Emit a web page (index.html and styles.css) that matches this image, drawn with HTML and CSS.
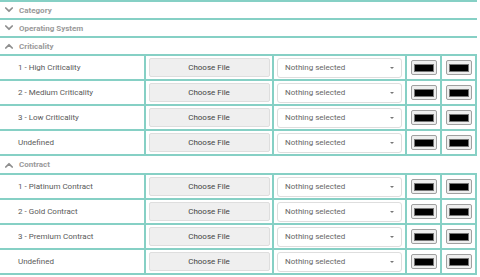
FILE: index.html
```html
<!DOCTYPE html>
<html>
<head>
<meta charset="utf-8">
<link rel="stylesheet" href="styles.css">
</head>
<body>
<div class="panel">
  <div class="hdr first"><svg class="chev" viewBox="0 0 10 7" width="8" height="6"><polyline points="1,1 5,5 9,1"/></svg><span>Category</span></div>
  <div class="hdr"><svg class="chev" viewBox="0 0 10 7" width="8" height="6"><polyline points="1,1 5,5 9,1"/></svg><span>Operating System</span></div>
  <div class="hdr"><svg class="chev" viewBox="0 0 10 7" width="8" height="6"><polyline points="1,6 5,2 9,6"/></svg><span>Criticality</span></div>
  <div class="grid">
    <div class="cell label">1 - High Criticality</div>
    <div class="cell"><div class="btn">Choose File</div></div>
    <div class="cell"><div class="sel"><span>Nothing selected</span><i class="caret"></i></div></div>
    <div class="cell"><div class="sw"><div class="sw-in"></div></div></div>
    <div class="cell"><div class="sw"><div class="sw-in"></div></div></div>

    <div class="cell label">2 - Medium Criticality</div>
    <div class="cell"><div class="btn">Choose File</div></div>
    <div class="cell"><div class="sel"><span>Nothing selected</span><i class="caret"></i></div></div>
    <div class="cell"><div class="sw"><div class="sw-in"></div></div></div>
    <div class="cell"><div class="sw"><div class="sw-in"></div></div></div>

    <div class="cell label">3 - Low Criticality</div>
    <div class="cell"><div class="btn">Choose File</div></div>
    <div class="cell"><div class="sel"><span>Nothing selected</span><i class="caret"></i></div></div>
    <div class="cell"><div class="sw"><div class="sw-in"></div></div></div>
    <div class="cell"><div class="sw"><div class="sw-in"></div></div></div>

    <div class="cell label">Undefined</div>
    <div class="cell"><div class="btn">Choose File</div></div>
    <div class="cell"><div class="sel"><span>Nothing selected</span><i class="caret"></i></div></div>
    <div class="cell"><div class="sw"><div class="sw-in"></div></div></div>
    <div class="cell"><div class="sw"><div class="sw-in"></div></div></div>
  </div>
  <div class="hdr nob"><svg class="chev" viewBox="0 0 10 7" width="8" height="6"><polyline points="1,6 5,2 9,6"/></svg><span>Contract</span></div>
  <div class="grid">
    <div class="cell label">1 - Platinum Contract</div>
    <div class="cell"><div class="btn">Choose File</div></div>
    <div class="cell"><div class="sel"><span>Nothing selected</span><i class="caret"></i></div></div>
    <div class="cell"><div class="sw"><div class="sw-in"></div></div></div>
    <div class="cell"><div class="sw"><div class="sw-in"></div></div></div>

    <div class="cell label">2 - Gold Contract</div>
    <div class="cell"><div class="btn">Choose File</div></div>
    <div class="cell"><div class="sel"><span>Nothing selected</span><i class="caret"></i></div></div>
    <div class="cell"><div class="sw"><div class="sw-in"></div></div></div>
    <div class="cell"><div class="sw"><div class="sw-in"></div></div></div>

    <div class="cell label">3 - Premium Contract</div>
    <div class="cell"><div class="btn">Choose File</div></div>
    <div class="cell"><div class="sel"><span>Nothing selected</span><i class="caret"></i></div></div>
    <div class="cell"><div class="sw"><div class="sw-in"></div></div></div>
    <div class="cell"><div class="sw"><div class="sw-in"></div></div></div>

    <div class="cell label">Undefined</div>
    <div class="cell"><div class="btn">Choose File</div></div>
    <div class="cell"><div class="sel"><span>Nothing selected</span><i class="caret"></i></div></div>
    <div class="cell"><div class="sw"><div class="sw-in"></div></div></div>
    <div class="cell"><div class="sw"><div class="sw-in"></div></div></div>
  </div>
</div>
</body>
</html>
```

FILE: styles.css
```css
html, body {
  margin: 0;
  padding: 0;
  background: #fff;
}
body {
  font-family: Roboto, "Liberation Sans", sans-serif;
  font-size: 8px;
}
.panel {
  width: 477px;
}
.hdr {
  height: 16px;
  border-top: 2px solid #86d0c5;
  display: flex;
  align-items: center;
  gap: 6px;
  padding-left: 5px;
  color: #9a9a9a;
  font-weight: 700;
}
.hdr.nob {
  border-top: 0;
  height: 17px;
}
.chev {
  fill: none;
  stroke: #8f8f8f;
  stroke-width: 2.2;
  stroke-linecap: round;
  stroke-linejoin: round;
}
.grid {
  display: grid;
  grid-template-columns: 144px 126px 131px 33px 33px;
  grid-auto-rows: 23px;
  gap: 2px;
  padding: 2px 2px 2px 0;
  background: #86d0c5;
}
.cell {
  background: #fff;
  display: flex;
  align-items: center;
  justify-content: center;
  min-width: 0;
}
.cell.label {
  justify-content: flex-start;
  padding-left: 18px;
  color: #5a5a5a;
}
.btn {
  width: 119px;
  height: 17px;
  background: #efefef;
  border: 1px solid #dedede;
  border-radius: 2px;
  display: flex;
  align-items: center;
  justify-content: center;
  color: #444;
}
.sel {
  width: 125px;
  height: 20px;
  box-sizing: border-box;
  background: #fff;
  border: 1px solid #dedede;
  border-radius: 3px;
  display: flex;
  align-items: center;
  justify-content: space-between;
  padding: 0 7px;
  color: #666;
}
.caret {
  width: 0;
  height: 0;
  border-left: 2px solid transparent;
  border-right: 2px solid transparent;
  border-top: 2px solid #777;
}
.sw {
  width: 24px;
  height: 13px;
  background: #eeeeee;
  border: 1px solid #a0a0a0;
  border-radius: 2px;
  display: flex;
  align-items: center;
  justify-content: center;
}
.sw-in {
  width: 18px;
  height: 6px;
  background: #000;
  border: 1px solid #777;
}
```
